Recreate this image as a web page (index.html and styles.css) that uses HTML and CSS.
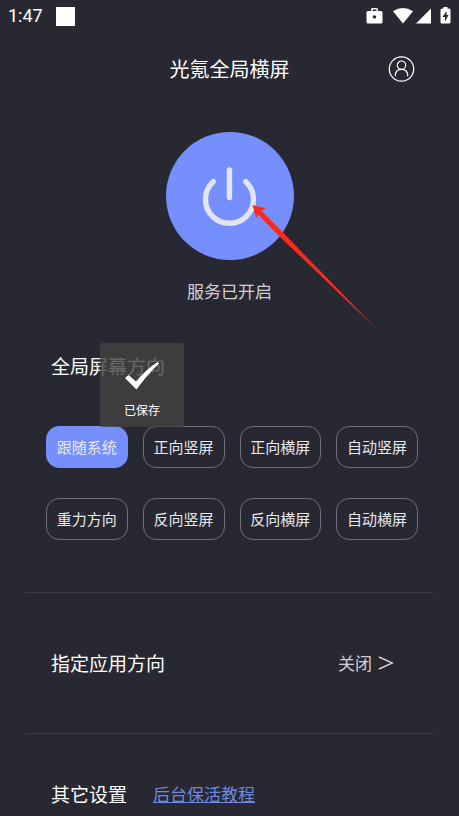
FILE: index.html
```html
<!DOCTYPE html>
<html lang="zh-CN">
<head>
<meta charset="utf-8">
<meta name="viewport" content="width=device-width, initial-scale=1">
<title>光氪全局横屏</title>
<link rel="stylesheet" href="styles.css">
</head>
<body>
<div class="screen">
  <div class="statusbar">
    <span class="clock">1:47</span>
    <span class="notice"></span>
    <svg class="indicators" width="88" height="20" viewBox="0 0 88 20" fill="#fff" aria-hidden="true">
      <path fill-rule="evenodd" d="M6 5V3.500Q6 2 7.500 2H11.500Q13 2 13 3.500V5H16Q17.500 5 17.500 6.500V16Q17.500 17.500 16 17.500H3Q1.500 17.500 1.500 16V6.500Q1.500 5 3 5ZM7.500 5H11.500V3.500H7.500ZM9.500 9.200a1.700 1.700 0 1 0 .01 0Z"/>
      <path d="M28 5.300Q38 -1.500 48 5.300L38 17.500Z"/>
      <path d="M66 2.500V17.500H51Z"/>
      <path fill-rule="evenodd" d="M78.500 2.500V1H82.500V2.500H84Q85.500 2.500 85.500 4V16Q85.500 17.500 84 17.500H77Q75.500 17.500 75.500 16V4Q75.500 2.500 77 2.500ZM81.500 5L77.500 11H80V15.500L83.500 9H81.500Z"/>
    </svg>
  </div>

  <header class="header">
    <h1 class="title">光氪全局横屏</h1>
    <button class="account" type="button" aria-label="账户">
      <svg width="28" height="28" viewBox="0 0 28 28" fill="none" stroke="#fff" stroke-width="1.200" aria-hidden="true">
        <circle cx="14.500" cy="14" r="12.200"/>
        <circle cx="14.500" cy="10.200" r="4.200"/>
        <path d="M8.300 20.800C8.300 16.500 10.500 14.400 14.500 14.400S20.700 16.500 20.700 20.800" stroke-linecap="round"/>
      </svg>
    </button>
  </header>

  <main>
    <section class="service">
      <button class="power" type="button" aria-label="服务开关">
        <svg width="64" height="64" viewBox="0 0 64 64" fill="none" stroke="#e4e4ec" stroke-width="5.400" stroke-linecap="round" aria-hidden="true">
          <path d="M31.500 6V33.500"/>
          <path d="M15.200 17.700A24 24 0 1 0 47.800 17.700"/>
        </svg>
      </button>
      <svg class="pointer" width="128" height="128" viewBox="0 0 128 128" fill="#fb2a1e" aria-hidden="true">
        <path d="M.5 1L13.700 4.300L9.400 6.700L30 27.500L124.500 125L26.500 31.500L5.800 10.300L4.300 13.900Z"/>
      </svg>
      <p class="state">服务已开启</p>
    </section>

    <section class="orientation">
      <div class="heading-row">
        <h2 class="heading">全局屏幕方向</h2>
        <div class="toast" role="status">
          <svg width="36" height="30" viewBox="0 0 36 30" fill="#fff" aria-hidden="true">
            <path d="M1 17L4.500 14L12 20.500Q22 8.500 33.500 1L35 2.500Q23 14 12.500 28.500Z"/>
          </svg>
          <span>已保存</span>
        </div>
      </div>
      <div class="modes">
        <button class="mode active" type="button">跟随系统</button>
        <button class="mode" type="button">正向竖屏</button>
        <button class="mode" type="button">正向横屏</button>
        <button class="mode" type="button">自动竖屏</button>
        <button class="mode" type="button">重力方向</button>
        <button class="mode" type="button">反向竖屏</button>
        <button class="mode" type="button">反向横屏</button>
        <button class="mode" type="button">自动横屏</button>
      </div>
    </section>

    <section class="apps">
      <h2 class="heading">指定应用方向</h2>
      <button class="value" type="button">关闭
        <svg width="16" height="16" viewBox="0 0 16 16" fill="none" stroke="#d4d4d8" stroke-width="1.400" aria-hidden="true"><path d="M1 2L14.500 8L1 14"/></svg>
      </button>
    </section>

    <section class="others">
      <h2 class="heading">其它设置</h2>
      <a class="guide" href="#guide">后台保活教程</a>
    </section>
  </main>
</div>
</body>
</html>
```
FILE: styles.css
```css
* {
  box-sizing: border-box;
}

body {
  margin: 0;
  background: #282832;
  color: #fff;
  font-family: "Noto Sans CJK SC", sans-serif;
  font-weight: 400;
}

h1,
h2,
p {
  margin: 0;
  font-weight: inherit;
}

button {
  margin: 0;
  padding: 0;
  border: 0;
  background: none;
  color: inherit;
  font: inherit;
  cursor: pointer;
}

svg {
  display: block;
}

.screen {
  min-height: 100vh;
  overflow: hidden;
}

.statusbar {
  display: flex;
  align-items: center;
  height: 32px;
  padding: 0 6px 0 8px;
}

.clock {
  font: 400 18px/24px Roboto, sans-serif;
}

.notice {
  width: 19px;
  height: 19px;
  margin-left: 13px;
  background: #fff;
}

.indicators {
  margin-left: auto;
}

.header {
  display: grid;
  grid-template-columns: 1fr auto 1fr;
  align-items: center;
  height: 74px;
  padding: 0 44px;
}

.title {
  grid-column: 2;
  font-size: 20px;
  line-height: 28px;
}

.account {
  justify-self: end;
}

.service {
  position: relative;
  display: flex;
  flex-direction: column;
  align-items: center;
  padding-top: 26px;
}

.power {
  display: grid;
  place-items: center;
  width: 128px;
  height: 128px;
  border-radius: 50%;
  background: #758fff;
}

.pointer {
  position: absolute;
  top: 98px;
  left: calc(50% + 22px);
  pointer-events: none;
}

.state {
  margin-top: 19px;
  color: #d0d0d4;
  font-size: 17px;
  line-height: 24px;
}

.orientation {
  padding: 49px 41px 52px 46px;
}

.heading-row {
  position: relative;
  padding-left: 5px;
}

.heading {
  font-size: 19px;
  line-height: 28px;
}

.toast {
  position: absolute;
  top: -9px;
  left: 54px;
  display: flex;
  flex-direction: column;
  align-items: center;
  gap: 10px;
  width: 84px;
  height: 84px;
  padding-top: 18px;
  border-radius: 2px;
  background: rgba(66, 65, 65, 0.8);
  font-size: 12px;
  line-height: 18px;
}

.modes {
  display: grid;
  grid-template-columns: repeat(4, 1fr);
  gap: 30px 15px;
  margin-top: 46px;
}

.mode {
  height: 42px;
  border: 1px solid #70707a;
  border-radius: 13px;
  color: #e8e8ec;
  font-size: 15px;
  line-height: 24px;
  white-space: nowrap;
}

.mode.active {
  border-color: #758fff;
  background: #758fff;
}

.apps,
.others {
  display: flex;
  align-items: center;
  margin: 0 25px;
  padding: 0 26px;
  border-top: 1px solid #3c3c46;
}

.apps {
  justify-content: space-between;
  height: 141px;
  padding-right: 40px;
}

.value {
  display: flex;
  align-items: center;
  gap: 6px;
  color: #d0d0d4;
  font-size: 17px;
  line-height: 24px;
}

.others {
  gap: 26px;
  padding-top: 46px;
}

.guide {
  color: #7089e0;
  font-size: 17px;
  line-height: 28px;
}
```
